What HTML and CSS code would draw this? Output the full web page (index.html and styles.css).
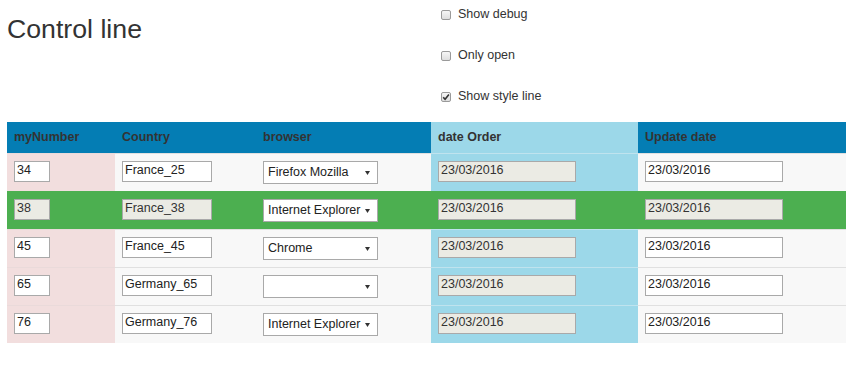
FILE: index.html
```html
<!DOCTYPE html>
<html lang="en">
<head>
<meta charset="utf-8">
<title>Control line</title>
<link rel="stylesheet" href="styles.css">
</head>
<body>
<div class="page">
  <div class="top">
    <h2 class="title">Control line</h2>
    <div class="options">
      <label class="opt"><span class="cb"></span>Show debug</label>
      <label class="opt"><span class="cb"></span>Only open</label>
      <label class="opt"><span class="cb checked"><svg viewBox="0 0 10 10" width="10" height="10"><path d="M2.2 5.2 L4.1 7.3 L7.9 2.6" fill="none" stroke="#333" stroke-width="1.6"/></svg></span>Show style line</label>
    </div>
  </div>
  <table class="grid">
    <colgroup>
      <col class="c1"><col class="c2"><col class="c3"><col class="c4"><col class="c5">
    </colgroup>
    <thead>
      <tr>
        <th>myNumber</th>
        <th>Country</th>
        <th>browser</th>
        <th class="info">date Order</th>
        <th>Update date</th>
      </tr>
    </thead>
    <tbody>
      <tr>
        <td class="pink"><input class="in-num" value="34"></td>
        <td><input class="in-country" value="France_25"></td>
        <td><span class="sel"><select><option>Firefox Mozilla</option></select><svg class="arrow" viewBox="0 0 5 4" width="5" height="4"><path d="M0 0 L5 0 L2.5 4 Z" fill="#333"/></svg></span></td>
        <td class="info"><input class="in-date" value="23/03/2016" disabled></td>
        <td><input class="in-date" value="23/03/2016"></td>
      </tr>
      <tr class="done">
        <td><input class="in-num" value="38" disabled></td>
        <td><input class="in-country" value="France_38" disabled></td>
        <td><span class="sel"><select><option>Internet Explorer</option></select><svg class="arrow" viewBox="0 0 5 4" width="5" height="4"><path d="M0 0 L5 0 L2.5 4 Z" fill="#333"/></svg></span></td>
        <td><input class="in-date" value="23/03/2016" disabled></td>
        <td><input class="in-date" value="23/03/2016" disabled></td>
      </tr>
      <tr>
        <td class="pink"><input class="in-num" value="45"></td>
        <td><input class="in-country" value="France_45"></td>
        <td><span class="sel"><select><option>Chrome</option></select><svg class="arrow" viewBox="0 0 5 4" width="5" height="4"><path d="M0 0 L5 0 L2.5 4 Z" fill="#333"/></svg></span></td>
        <td class="info"><input class="in-date" value="23/03/2016" disabled></td>
        <td><input class="in-date" value="23/03/2016"></td>
      </tr>
      <tr>
        <td class="pink"><input class="in-num" value="65"></td>
        <td><input class="in-country" value="Germany_65"></td>
        <td><span class="sel"><select><option></option></select><svg class="arrow" viewBox="0 0 5 4" width="5" height="4"><path d="M0 0 L5 0 L2.5 4 Z" fill="#333"/></svg></span></td>
        <td class="info"><input class="in-date" value="23/03/2016" disabled></td>
        <td><input class="in-date" value="23/03/2016"></td>
      </tr>
      <tr>
        <td class="pink"><input class="in-num" value="76"></td>
        <td><input class="in-country" value="Germany_76"></td>
        <td><span class="sel"><select><option>Internet Explorer</option></select><svg class="arrow" viewBox="0 0 5 4" width="5" height="4"><path d="M0 0 L5 0 L2.5 4 Z" fill="#333"/></svg></span></td>
        <td class="info"><input class="in-date" value="23/03/2016" disabled></td>
        <td><input class="in-date" value="23/03/2016"></td>
      </tr>
    </tbody>
  </table>
</div>
</body>
</html>
```
FILE: styles.css
```css
* { box-sizing: border-box; }
html, body { margin: 0; padding: 0; background: #fff; }
body {
  font-family: "Liberation Sans", Arial, sans-serif;
  font-size: 12.5px;
  color: #333;
}
.page {
  padding-left: 7px;
  width: 846px;
}
.top {
  display: flex;
  height: 122px;
}
.title {
  width: 434px;
  margin: 15px 0 0 0;
  font-size: 26.7px;
  font-weight: normal;
  line-height: 1.1;
  color: #333;
}
.options {
  display: flex;
  flex-direction: column;
  gap: 21px;
  padding-top: 4px;
}
.opt {
  display: flex;
  align-items: center;
  height: 20px;
  line-height: 20px;
  font-size: 12.5px;
  color: #333;
}
.cb {
  width: 10px;
  height: 10px;
  margin-right: 7px;
  border: 1px solid #9a9a9a;
  border-radius: 2px;
  background: linear-gradient(#f6f6f6, #dedede);
  display: flex;
  align-items: center;
  justify-content: center;
  position: relative;
  top: 1px;
}
.cb svg { display: block; margin: -1px; }

.grid {
  border-collapse: collapse;
  table-layout: fixed;
  width: 839px;
}
.c1 { width: 108px; }
.c2 { width: 141px; }
.c3 { width: 175px; }
.c4 { width: 207px; }
.c5 { width: 208px; }

.grid th {
  height: 31px;
  padding: 0 7px;
  text-align: left;
  font-weight: bold;
  font-size: 12.5px;
  color: #333;
  background: #047db4;
}
.grid th.info { background: #9cd8e9; }

.grid td {
  padding: 7px;
  border-top: 1px solid #e0e0e0;
  background: #f8f8f8;
  vertical-align: top;
  height: 38px;
}
.grid td.pink { background: #f2dede; border-top-color: #eadada; }
.grid td.info { background: #9cd8e9; border-top-color: #bfe3ee; }
.grid tr.done td { background: #4caf50; border-top-color: #4caf50; }

.grid input {
  display: block;
  height: 21px;
  padding: 0 2px 3px 2px;
  border: 1px solid #a9a9a9;
  border-radius: 0;
  background: #fff;
  font-family: "Liberation Sans", Arial, sans-serif;
  font-size: 12.5px;
  color: #222;
  line-height: 16px;
}
.grid input:disabled {
  background: #ebebe4;
  color: #333;
  opacity: 1;
}
.in-num { width: 36px; }
.in-country { width: 90px; }
.in-date { width: 138px; }

.sel {
  position: relative;
  display: block;
  width: 115px;
  height: 23px;
}
.sel select {
  appearance: none;
  -webkit-appearance: none;
  display: block;
  width: 115px;
  height: 23px;
  padding: 0 0 0 4px;
  border: 1px solid #a9a9a9;
  border-radius: 0;
  background: #fff;
  font-family: "Liberation Sans", Arial, sans-serif;
  font-size: 12.5px;
  color: #222;
}
.sel .arrow {
  position: absolute;
  right: 8px;
  top: 10px;
  pointer-events: none;
}
```
